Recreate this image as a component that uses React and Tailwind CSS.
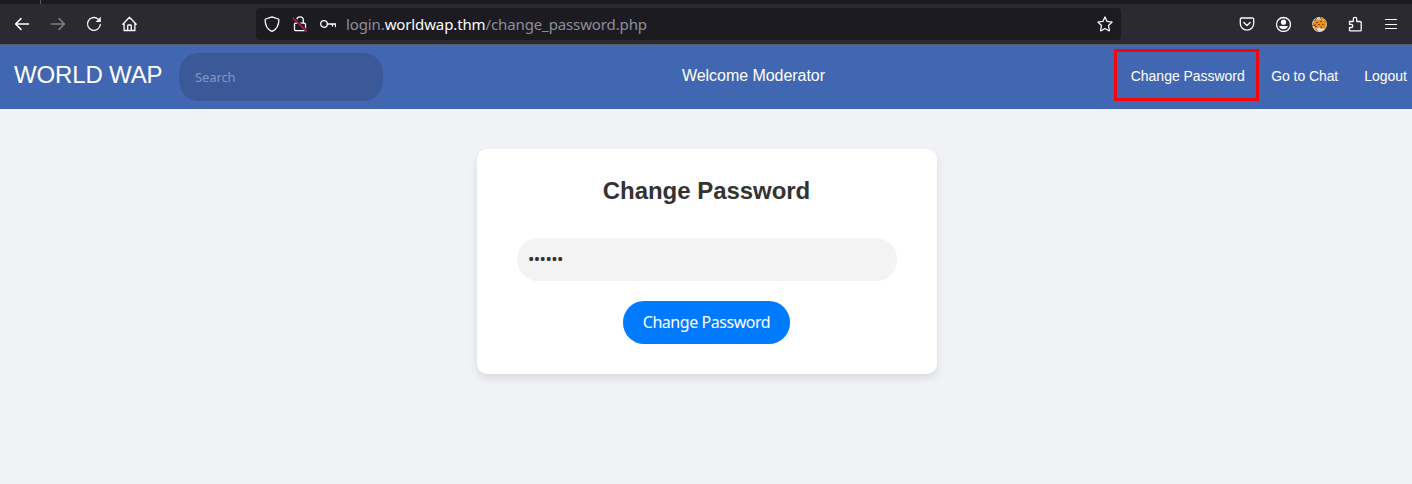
function Icon({ children, className = "" }) {
  return (
    <svg
      viewBox="0 0 16 16"
      className={`size-4 shrink-0 text-[#fbfbfe] ${className}`}
      fill="none"
      stroke="currentColor"
      strokeWidth="1.3"
      strokeLinecap="round"
      strokeLinejoin="round"
    >
      {children}
    </svg>
  );
}

function Toolbar() {
  return (
    <div className="flex h-10 items-center bg-[#2b2a33] pr-[13px] pl-3.5">
      <div className="flex w-[242px] gap-5">
        <Icon>
          <path d="M14.5 8H1.7M7 2.6 1.6 8 7 13.4" strokeWidth="1.5" />
        </Icon>
        <Icon className="opacity-40">
          <path d="M1.5 8h12.8M9 2.6 14.4 8 9 13.4" strokeWidth="1.5" />
        </Icon>
        <Icon>
          <path d="M14.3 8.5A6.400 6.400 0 1 1 12 3" />
          <path d="M14.800 .8v5.200H9.600z" fill="currentColor" stroke="none" />
        </Icon>
        <Icon>
          <path d="M.8 8.2 7.500 1.200l6.700 7M2.100 7.200v7.300h10.800V7.200M5.700 14.300V9.800a.8.8 0 0 1 .8-.8h2a.8.8 0 0 1 .8.8v4.500" />
        </Icon>
      </div>
      <div className="flex h-8 w-[865px] items-center rounded bg-[#1c1b22] px-2">
        <div className="flex w-[82px] gap-3">
          <Icon>
            <path d="M8 .8 14.4 3c.3.1.5.3.5.7-.1 5.600-2.200 9.500-6.300 11.400a1.400 1.400 0 0 1-1.200 0C3.300 13.200 1.200 9.300 1.100 3.700c0-.4.2-.6.5-.7z" />
          </Icon>
          <Icon>
            <path d="M4.700 6.500V4.100a3.300 3.300 0 0 1 6.600 0v2.400M3.500 7.200h9a1 1 0 0 1 1 1v5.400a1 1 0 0 1-1 1h-9a1 1 0 0 1-1-1V8.200a1 1 0 0 1 1-1z" />
            <path d="M1.200 1.500 14.800 15.200" stroke="#1c1b22" strokeWidth="2.500" />
            <path d="M1.200 2.200 14.500 15.200" stroke="#e21845" strokeWidth="1.200" />
          </Icon>
          <Icon>
            <circle cx="4" cy="8" r="3.300" />
            <path d="M7.500 8h8v2.500M12.500 8v2" />
          </Icon>
        </div>
        <div className="flex-1 font-['Noto_Sans','Open_Sans',sans-serif] text-[15px] leading-8 tracking-[-0.12px] whitespace-nowrap text-[#8f8e98]">
          login.<span className="text-[#fbfbfe]">worldwap.thm</span>/change_password.php
        </div>
        <Icon>
          <path d="m8 .9 2.100 4.500 5 .7-3.600 3.400.9 4.900a.4.4 0 0 1-.6.400L8 12.500l-3.800 2.300a.4.4 0 0 1-.6-.4l.9-4.900L.9 6.100l5-.7z" />
        </Icon>
      </div>
      <div className="ml-auto flex gap-5">
        <Icon>
          <path d="M2.500 2h11a1.200 1.200 0 0 1 1.200 1.200V7.500a6.700 6.700 0 0 1-13.400 0V3.200A1.200 1.200 0 0 1 2.500 2zM4.800 6.500 8 9.500l3.200-3" />
        </Icon>
        <Icon>
          <circle cx="8.500" cy="8.500" r="7" />
          <circle cx="8.500" cy="6.200" r="2.600" fill="currentColor" stroke="none" />
          <path d="M4.200 10h8.600c0 1.900-1.700 3.200-4.300 3.200S4.200 11.900 4.200 10z" fill="currentColor" stroke="none" />
        </Icon>
        <Icon>
          <circle cx="8.500" cy="8.500" r="7.400" fill="#dedcd8" stroke="none" />
          <path d="M1.500 7.500 4.500 4l4-.8 3 1 3 .2.700 4-1.700 3-3 1.600-2-1.500-4 1.200L2 9.500z" fill="#f08c13" stroke="none" />
          <path d="M3.500 5 5.500 2.500M9.500 1.500l1 2M1.500 9.500l3-.5M5.500 6.500h1M9.500 5.500h1M7.500 8.500h1M11.500 8.500h1M4.500 10.500h1M9.500 11h1" stroke="#584029" strokeWidth=".9" />
          <path d="m4 12.500 2.500 2M11.500 2.500l3 3M13 12.500l1.500-2" stroke="#f08c13" />
        </Icon>
        <Icon>
          <path d="M2.500 5.500h3.800V3a1.700 1.700 0 0 1 3.400 0v2.500h3.500a1 1 0 0 1 1 1v7.400a1 1 0 0 1-1 1H3.500a1 1 0 0 1-1-1v-2.400h1.700a1.600 1.600 0 0 0 0-3.200H2.500z" />
        </Icon>
        <Icon>
          <path d="M2.500 3.500h11M2.500 8.500h11M2.500 12.500h11" strokeWidth="1.200" />
        </Icon>
      </div>
    </div>
  );
}

function NavBar() {
  return (
    <nav className="flex h-16 items-center bg-[#4267b2] pl-3.5 text-white">
      <div className="w-[165px] pb-1 text-2xl leading-8 tracking-[-0.15px] whitespace-nowrap">WORLD WAP</div>
      <input
        aria-label="Search"
        placeholder="Search"
        className="h-12 w-[204px] rounded-[20px] bg-[#3b5998] px-4 font-['Noto_Sans','Open_Sans',sans-serif] text-[13px] tracking-[-0.1px] outline-none placeholder:text-[#8397c3]"
      />
      <div className="ml-[299px] w-[144px] pb-0.5 text-base tracking-[-0.05px] whitespace-nowrap">Welcome Moderator</div>
      <div className="ml-auto flex items-center pr-[5px] text-sm whitespace-nowrap">
        <a className="mr-3 mb-1 flex h-[52px] w-[145px] items-center justify-center border-[3px] border-[#f60409] pt-0.5 pl-0.5 tracking-[-0.03px]">
          Change Password
        </a>
        <a className="mr-[26px] mb-0.5 tracking-[-0.08px]">Go to Chat</a>
        <a className="mb-0.5">Logout</a>
      </div>
    </nav>
  );
}

export default function App() {
  return (
    <div className="min-h-screen bg-[#f0f2f5] font-['Liberation_Sans',Arial,sans-serif]">
      <div className="h-1 bg-[#1c1b22] pl-10">
        <div className="h-1 w-px bg-[#5b5b66]" />
      </div>
      <Toolbar />
      <div className="h-px bg-[#5b5b66]" />
      <NavBar />
      <main className="flex justify-center pt-10 pl-0.5">
        <form className="flex h-[225px] w-[460px] flex-col items-center rounded-[10px] bg-white px-10 pt-[26px] shadow-[0_4px_8px_rgba(0,0,0,0.1)]">
          <h2 className="pr-px text-2xl leading-8 font-bold tracking-[-0.04px] text-[#333]">Change Password</h2>
          <div className="mt-[31px] flex h-[43px] w-full items-center rounded-[21px] bg-[#f3f3f3] px-[11px] pb-0.5 font-['Noto_Sans','Open_Sans',sans-serif] text-[17px] tracking-[-0.6px] text-[#333]">
            ••••••
          </div>
          <button
            type="button"
            className="mt-5 mr-px h-[43px] w-[167px] rounded-[21px] bg-[#007bff] pb-0.5 font-['Noto_Sans','Open_Sans',sans-serif] text-base tracking-[-0.45px] whitespace-nowrap text-white"
          >
            Change Password
          </button>
        </form>
      </main>
    </div>
  );
}
